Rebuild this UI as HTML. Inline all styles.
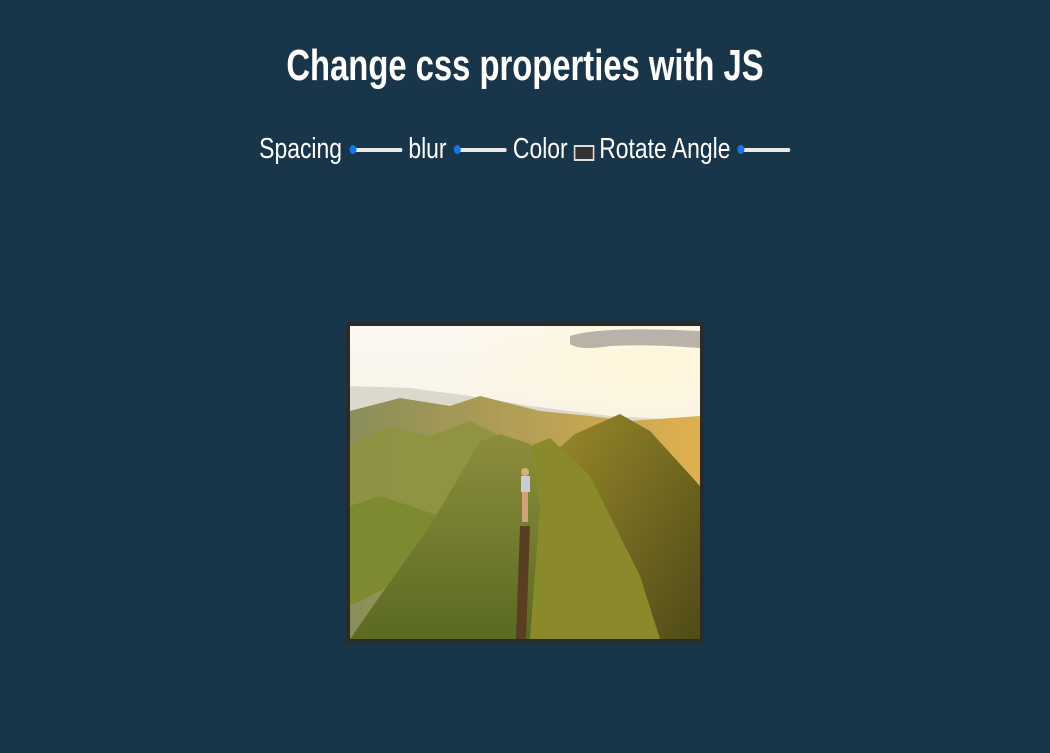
<!DOCTYPE html>
<html><head><style>
html,body{margin:0;padding:0;width:1050px;height:753px;background:#193549;overflow:hidden;font-family:"Liberation Sans",Arial,sans-serif;color:#fff}
.t{position:absolute;left:0;width:1050px;text-align:center;top:41px;font-size:44px;font-weight:bold;transform:scaleX(.745);transform-origin:525px 0}
.c{position:absolute;left:3px;width:1050px;top:133px;text-align:center;font-size:29px;transform:scaleX(.79);transform-origin:525px 0;white-space:nowrap}
.s{display:inline-block;width:64px;height:4px;background:#e8e8e8;border-radius:2px;position:relative;vertical-align:middle;margin:0 8px 0 12px}
.s:before{content:"";position:absolute;left:-3px;top:-3px;width:9px;height:9px;border-radius:50%;background:#1a73e8}
.k{display:inline-block;width:22px;height:12px;border:2px solid #ddd;background:#333;vertical-align:middle;margin:0 6px 0 8px;position:relative;top:3px}
.f{position:absolute;left:346px;top:322px;width:350px;height:313px;border:4px solid #2b2b2b;overflow:hidden}
</style></head><body>
<div class="t">Change css properties with JS</div>
<div class="c">Spacing<span class="s"></span>blur<span class="s"></span>Color<span class="k"></span>Rotate Angle<span class="s"></span></div>
<div class="f">
<svg width="350" height="313" viewBox="0 0 350 313">
<defs>
<linearGradient id="sky" x1="0" y1="0" x2="0" y2="1"><stop offset="0" stop-color="#fbf8f1"/><stop offset=".6" stop-color="#f6efe0"/><stop offset="1" stop-color="#f5d99a"/></linearGradient>
<radialGradient id="sun" cx=".85" cy=".3" r=".6"><stop offset="0" stop-color="#fff6d8"/><stop offset="1" stop-color="#fff6d8" stop-opacity="0"/></radialGradient>
<linearGradient id="far" x1="0" y1="0" x2="1" y2="0"><stop offset="0" stop-color="#8a8e5a"/><stop offset="1" stop-color="#e0b050"/></linearGradient>
<linearGradient id="l" x1="0" y1="0" x2="0" y2="1"><stop offset="0" stop-color="#8d8e3c"/><stop offset="1" stop-color="#5a6a22"/></linearGradient>
<linearGradient id="r" x1="0" y1="0" x2="1" y2="1"><stop offset="0" stop-color="#9a8a2a"/><stop offset="1" stop-color="#4f4a18"/></linearGradient>
</defs>
<rect width="350" height="313" fill="url(#sky)"/>
<rect width="350" height="120" fill="url(#sun)"/>
<path d="M220 10 Q250 0 350 5 L350 22 Q300 18 260 20 Q230 25 220 18Z" fill="#9a9690" opacity=".7"/>
<path d="M0 60 L60 62 L120 70 L180 80 L260 90 L350 95 L350 150 L0 150Z" fill="#c8c6b8" opacity=".6"/>
<path d="M0 85 L50 72 L100 80 L130 70 L190 85 L240 90 L280 95 L350 90 L350 313 L0 313Z" fill="url(#far)"/>
<path d="M0 120 L40 100 L80 110 L120 95 L150 110 L130 130 L80 200 L0 230Z" fill="#8e9440" opacity=".9"/>
<path d="M0 180 L30 170 L90 190 L60 250 L0 280Z" fill="#7d8a30"/>
<path d="M200 130 L225 108 L270 88 L300 105 L350 160 L350 313 L250 313Z" fill="url(#r)"/>
<path d="M180 120 L200 112 L240 150 L290 250 L310 313 L170 313Z" fill="#8a8a2c"/>
<path d="M130 115 L150 108 L180 118 L190 180 L180 313 L0 313 L30 270 L80 200Z" fill="url(#l)"/>
<path d="M170 200 L180 200 L176 313 L166 313Z" fill="#5a3e22"/>
<rect x="171" y="150" width="9" height="16" fill="#c8ccdc"/>
<rect x="172" y="166" width="6" height="30" fill="#d4a27a"/>
<circle cx="175" cy="146" r="4" fill="#d8b070"/>
</svg>
</div>
</body></html>
